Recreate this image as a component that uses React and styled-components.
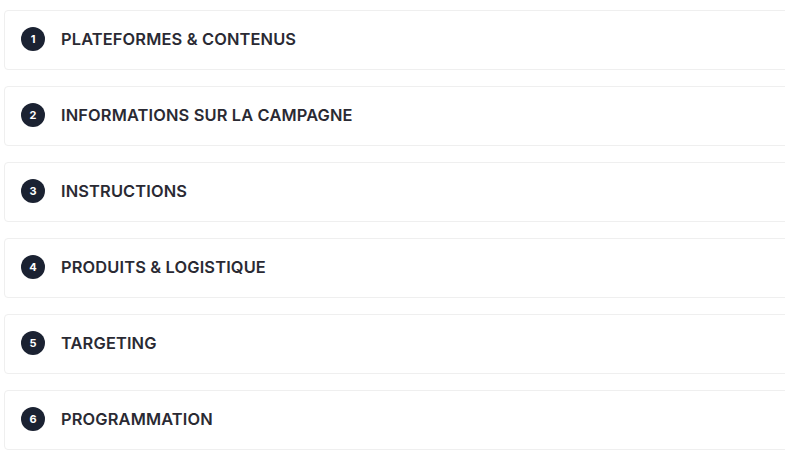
import React from 'react';
import styled, { createGlobalStyle } from 'styled-components';

const GlobalStyle = createGlobalStyle`
  html, body {
    margin: 0;
    padding: 0;
    background: #ffffff;
    overflow: hidden;
  }
  body {
    font-family: Inter, "Noto Sans", sans-serif;
  }
`;

const List = styled.div`
  display: flex;
  flex-direction: column;
  gap: 16px;
  padding: 10px 0 0 4px;
  width: 820px;
`;

const Card = styled.div`
  display: flex;
  align-items: center;
  gap: 16px;
  height: 56px;
  padding: 0 16px 2px;
  border: 1px solid #efefef;
  border-radius: 4px;
  background: #ffffff;
`;

const Badge = styled.span`
  display: flex;
  align-items: center;
  justify-content: center;
  width: 24px;
  height: 24px;
  border-radius: 50%;
  background: #1b2232;
  color: #ffffff;
  font-size: 11px;
  font-weight: 700;
  flex-shrink: 0;
`;

const Title = styled.span`
  font-size: 16.4px;
  font-weight: 600;
  color: #2a2a33;
  letter-spacing: 0.15px;
`;

const steps = [
  'PLATEFORMES & CONTENUS',
  'INFORMATIONS SUR LA CAMPAGNE',
  'INSTRUCTIONS',
  'PRODUITS & LOGISTIQUE',
  'TARGETING',
  'PROGRAMMATION',
];

export default function App() {
  return (
    <>
      <GlobalStyle />
      <List>
        {steps.map((s, i) => (
          <Card key={s}>
            <Badge>{i + 1}</Badge>
            <Title>{s}</Title>
          </Card>
        ))}
      </List>
    </>
  );
}
